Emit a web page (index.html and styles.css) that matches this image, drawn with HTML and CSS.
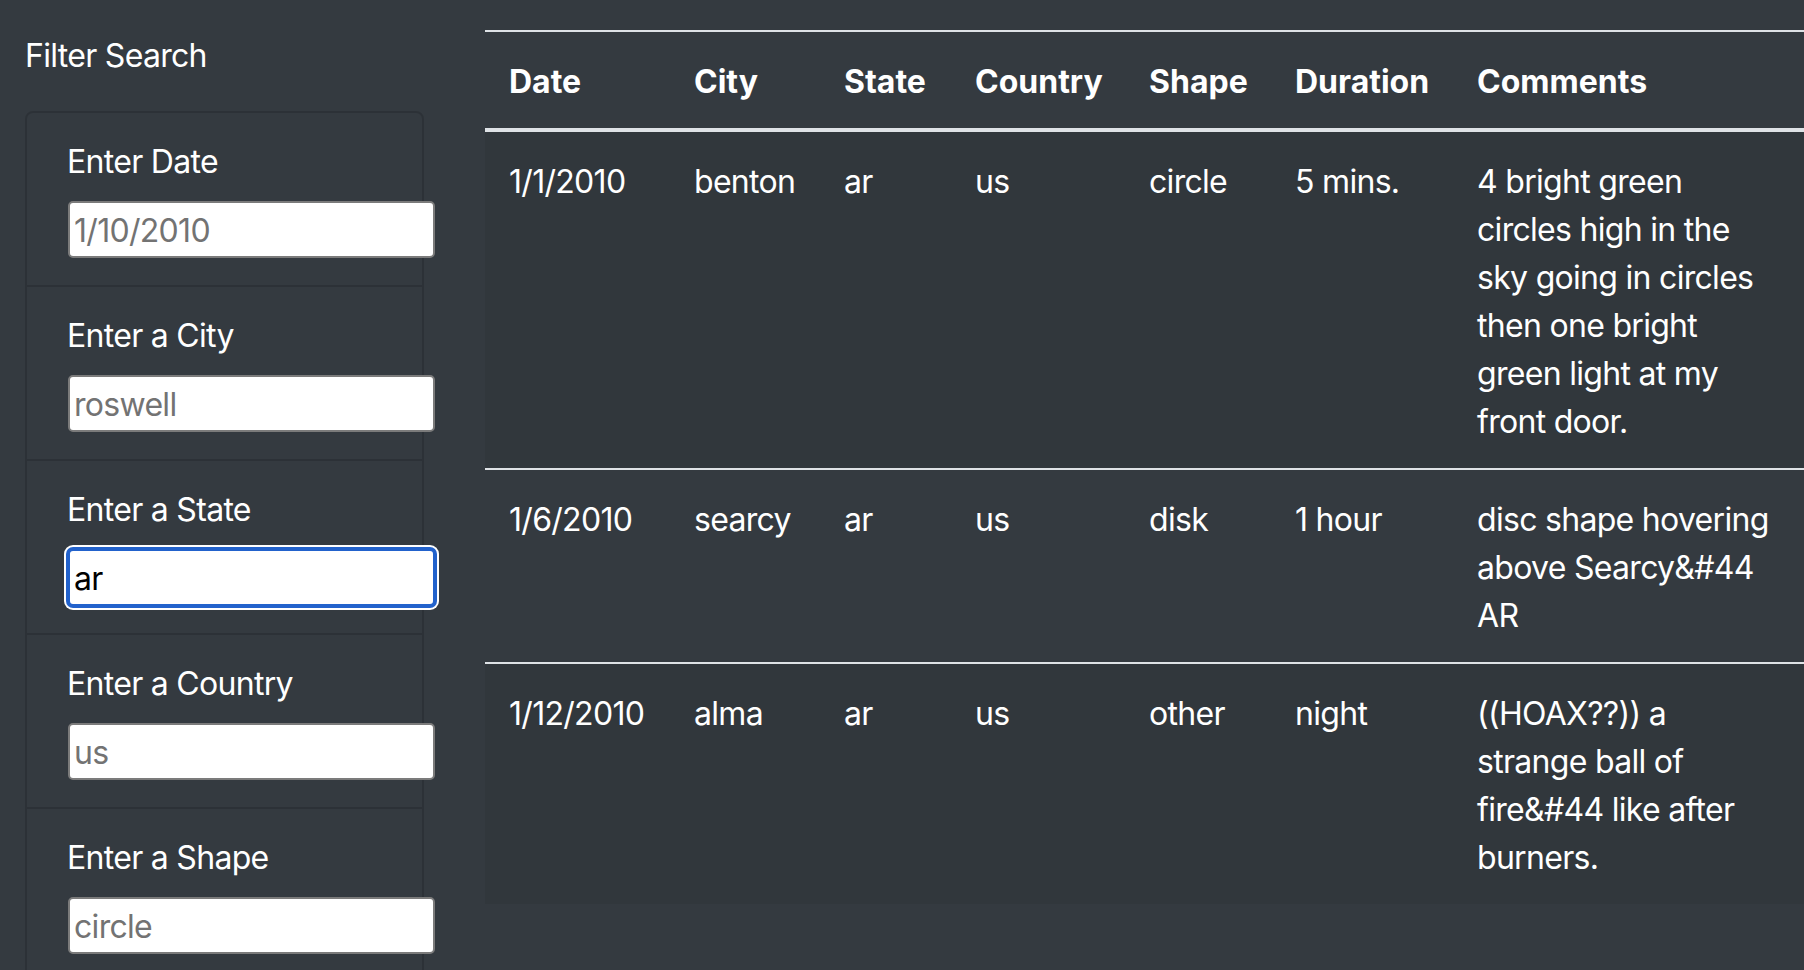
FILE: index.html
```html
<!DOCTYPE html>
<html lang="en">
<head>
<meta charset="utf-8">
<title>UFO Sightings - Filter Search</title>
<link rel="stylesheet" href="styles.css">
</head>
<body>
<div class="page">
  <aside class="filters">
    <h2 class="filters-title">Filter Search</h2>
    <ul class="filter-list">
      <li class="filter-item">
        <label class="filter-label" for="datetime">Enter Date</label>
        <input class="filter-input" id="datetime" type="text" placeholder="1/10/2010">
      </li>
      <li class="filter-item">
        <label class="filter-label" for="city">Enter a City</label>
        <input class="filter-input" id="city" type="text" placeholder="roswell">
      </li>
      <li class="filter-item">
        <label class="filter-label" for="state">Enter a State</label>
        <input class="filter-input is-focused" id="state" type="text" value="ar">
      </li>
      <li class="filter-item">
        <label class="filter-label" for="country">Enter a Country</label>
        <input class="filter-input" id="country" type="text" placeholder="us">
      </li>
      <li class="filter-item">
        <label class="filter-label" for="shape">Enter a Shape</label>
        <input class="filter-input" id="shape" type="text" placeholder="circle">
      </li>
    </ul>
  </aside>
  <main class="results">
    <table class="ufo-table">
      <colgroup>
        <col class="col-date">
        <col class="col-city">
        <col class="col-state">
        <col class="col-country">
        <col class="col-shape">
        <col class="col-duration">
        <col class="col-comments">
      </colgroup>
      <thead>
        <tr>
          <th>Date</th>
          <th>City</th>
          <th>State</th>
          <th>Country</th>
          <th>Shape</th>
          <th>Duration</th>
          <th>Comments</th>
        </tr>
      </thead>
      <tbody>
        <tr>
          <td>1/1/2010</td>
          <td>benton</td>
          <td>ar</td>
          <td>us</td>
          <td>circle</td>
          <td>5 mins.</td>
          <td>4 bright green circles high in the sky going in circles then one bright green light at my front door.</td>
        </tr>
        <tr>
          <td>1/6/2010</td>
          <td>searcy</td>
          <td>ar</td>
          <td>us</td>
          <td>disk</td>
          <td>1 hour</td>
          <td>disc shape hovering above Searcy&amp;#44 AR</td>
        </tr>
        <tr>
          <td>1/12/2010</td>
          <td>alma</td>
          <td>ar</td>
          <td>us</td>
          <td>other</td>
          <td>night</td>
          <td>((HOAX??)) a strange ball of fire&amp;#44 like after burners.</td>
        </tr>
      </tbody>
    </table>
  </main>
</div>
</body>
</html>
```

FILE: styles.css
```css
html, body {
  margin: 0;
  padding: 0;
  background: #343a40;
}

body {
  color: #ffffff;
  font-family: "Inter", "Liberation Sans", sans-serif;
  font-size: 32px;
  line-height: 48px;
  letter-spacing: -0.7px;
  overflow: hidden;
}

.page {
  display: flex;
  align-items: flex-start;
}

.filters {
  flex: 0 0 485px;
  box-sizing: border-box;
  padding-left: 25px;
  padding-top: 32px;
}

.filters-title {
  margin: 0 0 31px 0;
  font-size: 32px;
  line-height: 48px;
  font-weight: 400;
}

.filter-list {
  list-style: none;
  margin: 0;
  padding: 0;
  width: 399px;
  box-sizing: border-box;
  border: 2px solid rgba(0, 0, 0, 0.14);
  border-radius: 8px;
}

.filter-item {
  padding: 24px 40px 27px 40px;
}

.filter-item + .filter-item {
  border-top: 2px solid rgba(0, 0, 0, 0.14);
}

.filter-label {
  display: block;
  padding-top: 1px;
  margin-bottom: 15px;
  line-height: 48px;
}

.filter-input {
  display: block;
  box-sizing: border-box;
  width: 367px;
  height: 57px;
  margin: 0 0 0 1px;
  padding: 2px 4px 0 4px;
  border: 2px solid #7b7b7b;
  border-radius: 5px;
  background: #ffffff;
  color: #000000;
  font-family: "Inter", "Liberation Sans", sans-serif;
  font-size: 32px;
  letter-spacing: -0.7px;
  outline: none;
}

.filter-input::placeholder {
  color: #737373;
  opacity: 1;
}

.filter-input.is-focused {
  border-color: #2262cc;
  box-shadow: 0 0 0 2px #2262cc, 0 0 0 4px #ffffff;
}

.results {
  flex: 1 1 auto;
  padding-top: 30px;
}

.ufo-table {
  width: 1319px;
  table-layout: fixed;
  border-collapse: collapse;
  color: #ffffff;
}

.col-date { width: 185px; }
.col-city { width: 150px; }
.col-state { width: 131px; }
.col-country { width: 174px; }
.col-shape { width: 146px; }
.col-duration { width: 182px; }
.col-comments { width: 351px; }

.ufo-table th,
.ufo-table td {
  padding: 26px 24px 22px 24px;
  text-align: left;
  line-height: 48px;
}

.ufo-table th {
  font-weight: 700;
  letter-spacing: 0;
  vertical-align: bottom;
  border-top: 2px solid #dee2e6;
  border-bottom: 4px solid #dee2e6;
}

.ufo-table td {
  vertical-align: top;
  border-top: 2px solid #dee2e6;
}

.ufo-table tbody tr:nth-of-type(odd) {
  background-color: rgba(0, 0, 0, 0.05);
}
```
